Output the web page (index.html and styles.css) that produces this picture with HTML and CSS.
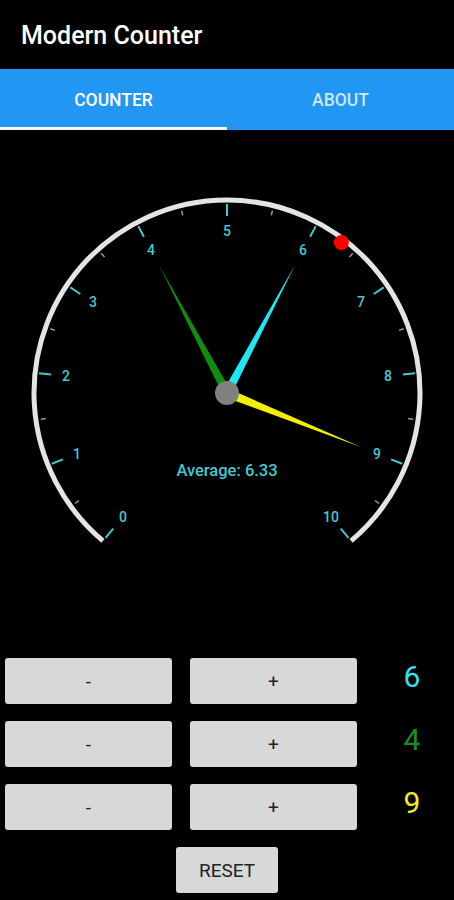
FILE: index.html
```html
<!DOCTYPE html>
<html lang="en">
<head>
    <meta charset="UTF-8">
    <meta name="viewport" content="width=device-width, initial-scale=1.0">
    <title>Modern Counter</title>
    <link rel="stylesheet" href="styles.css">
</head>
<body>
    <header class="app-bar">Modern Counter</header>
    <nav class="tabs">
        <div class="tab active">COUNTER</div>
        <div class="tab">ABOUT</div>
    </nav>

    <svg class="gauge" width="454" height="510" viewBox="0 0 454 510">
        <g transform="translate(227 263)">
            <path class="dial" d="M -124.06 147.85 A 193 193 0 1 1 124.06 147.85"/>

            <!-- minor ticks -->
            <g class="minor">
                <line x1="0" y1="-188" x2="0" y2="-183" transform="rotate(-126)"/>
                <line x1="0" y1="-188" x2="0" y2="-183" transform="rotate(-98)"/>
                <line x1="0" y1="-188" x2="0" y2="-183" transform="rotate(-70)"/>
                <line x1="0" y1="-188" x2="0" y2="-183" transform="rotate(-42)"/>
                <line x1="0" y1="-188" x2="0" y2="-183" transform="rotate(-14)"/>
                <line x1="0" y1="-188" x2="0" y2="-183" transform="rotate(14)"/>
                <line x1="0" y1="-188" x2="0" y2="-183" transform="rotate(42)"/>
                <line x1="0" y1="-188" x2="0" y2="-183" transform="rotate(70)"/>
                <line x1="0" y1="-188" x2="0" y2="-183" transform="rotate(98)"/>
                <line x1="0" y1="-188" x2="0" y2="-183" transform="rotate(126)"/>
            </g>

            <!-- major ticks -->
            <g class="major">
                <line x1="0" y1="-189" x2="0" y2="-177" transform="rotate(-140)"/>
                <line x1="0" y1="-189" x2="0" y2="-177" transform="rotate(-112)"/>
                <line x1="0" y1="-189" x2="0" y2="-177" transform="rotate(-84)"/>
                <line x1="0" y1="-189" x2="0" y2="-177" transform="rotate(-56)"/>
                <line x1="0" y1="-189" x2="0" y2="-177" transform="rotate(-28)"/>
                <line x1="0" y1="-189" x2="0" y2="-177" transform="rotate(0)"/>
                <line x1="0" y1="-189" x2="0" y2="-177" transform="rotate(28)"/>
                <line x1="0" y1="-189" x2="0" y2="-177" transform="rotate(56)"/>
                <line x1="0" y1="-189" x2="0" y2="-177" transform="rotate(84)"/>
                <line x1="0" y1="-189" x2="0" y2="-177" transform="rotate(112)"/>
                <line x1="0" y1="-189" x2="0" y2="-177" transform="rotate(140)"/>
            </g>

            <g class="labels">
                <text x="-104" y="124">0</text>
                <text x="-150" y="61">1</text>
                <text x="-161" y="-17">2</text>
                <text x="-134" y="-91">3</text>
                <text x="-76" y="-143">4</text>
                <text x="0" y="-162">5</text>
                <text x="76" y="-143">6</text>
                <text x="134" y="-91">7</text>
                <text x="161" y="-17">8</text>
                <text x="150" y="61">9</text>
                <text x="104" y="124">10</text>
            </g>

            <!-- average marker -->
            <circle class="avg-dot" cx="0" cy="-189" r="7.5" transform="rotate(37.24)"/>

            <polygon class="needle green" points="-4.5,0 4.5,0 0,-145" transform="rotate(-28)"/>
            <polygon class="needle cyan" points="-4.5,0 4.5,0 0,-145" transform="rotate(28)"/>
            <polygon class="needle yellow" points="-4.5,0 4.5,0 0,-145" transform="rotate(112)"/>
            <circle class="hub" cx="0" cy="0" r="12"/>

            <text class="average" x="0" y="77">Average: 6.33</text>
        </g>
    </svg>

    <section class="controls">
        <button class="btn">-</button>
        <button class="btn">+</button>
        <div class="count cyan-text">6</div>

        <button class="btn">-</button>
        <button class="btn">+</button>
        <div class="count green-text">4</div>

        <button class="btn">-</button>
        <button class="btn">+</button>
        <div class="count yellow-text">9</div>
    </section>

    <div class="reset-row">
        <button class="btn reset">RESET</button>
    </div>
</body>
</html>
```

FILE: styles.css
```css
body {
    margin: 0;
    background-color: #000000;
    font-family: Roboto, "Noto Sans", sans-serif;
    color: #ffffff;
}
.app-bar {
    height: 69px;
    line-height: 72px;
    padding-left: 21px;
    font-size: 25px;
    font-weight: 500;
    color: #ffffff;
}
.tabs {
    display: flex;
    height: 61px;
    background-color: #2196f3;
}
.tab {
    flex: 1;
    display: flex;
    align-items: center;
    justify-content: center;
    font-size: 17.5px;
    font-weight: 500;
    color: rgba(255, 255, 255, 0.78);
    border-bottom: 3px solid transparent;
    padding-top: 3px;
}
.tab.active {
    color: #ffffff;
    border-bottom-color: #eef6fd;
}
.gauge {
    display: block;
}
.dial {
    fill: none;
    stroke: #e4e4e4;
    stroke-width: 5;
}
.minor line {
    stroke: #999999;
    stroke-width: 1.5;
}
.major line {
    stroke: #45c8d2;
    stroke-width: 2;
}
.labels text {
    fill: #45c8d2;
    font-size: 14px;
    font-weight: 500;
    text-anchor: middle;
    dominant-baseline: central;
}
.avg-dot {
    fill: #ff0000;
}
.needle.green {
    fill: #118c11;
}
.needle.cyan {
    fill: #1ee8f4;
}
.needle.yellow {
    fill: #f4ee00;
}
.hub {
    fill: #808080;
}
.average {
    fill: #45c8d2;
    font-size: 16.5px;
    font-weight: 500;
    text-anchor: middle;
    dominant-baseline: central;
}
.controls {
    display: grid;
    grid-template-columns: 167px 167px 1fr;
    grid-auto-rows: 46px;
    column-gap: 18px;
    row-gap: 17px;
    padding: 18px 5px 0;
}
.btn {
    background-color: #d7d8d8;
    color: #222222;
    border: none;
    border-radius: 3px;
    font-family: Roboto, "Noto Sans", sans-serif;
    font-size: 19px;
    padding: 0;
}
.count {
    display: flex;
    align-items: center;
    justify-content: center;
    font-size: 30px;
    padding-bottom: 10px;
}
.cyan-text {
    color: #38e0ee;
}
.green-text {
    color: #1e8c1e;
}
.yellow-text {
    color: #eeee22;
}
.reset-row {
    display: flex;
    justify-content: center;
    padding-top: 17px;
}
.reset {
    width: 102px;
    height: 46px;
    font-size: 19px;
}
```
